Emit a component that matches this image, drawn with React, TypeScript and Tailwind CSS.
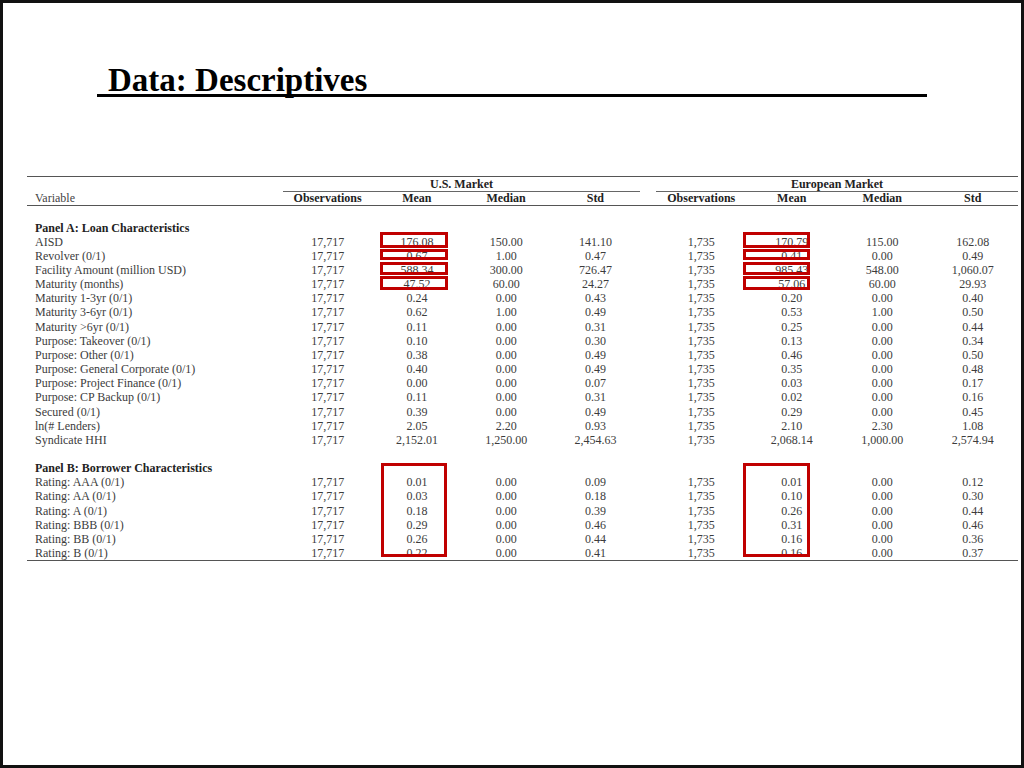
const panelA: [string, string[]][] = [
  ['AISD', ['17,717', '176.08', '150.00', '141.10', '1,735', '170.79', '115.00', '162.08']],
  ['Revolver (0/1)', ['17,717', '0.67', '1.00', '0.47', '1,735', '0.41', '0.00', '0.49']],
  ['Facility Amount (million USD)', ['17,717', '588.34', '300.00', '726.47', '1,735', '985.43', '548.00', '1,060.07']],
  ['Maturity (months)', ['17,717', '47.52', '60.00', '24.27', '1,735', '57.06', '60.00', '29.93']],
  ['Maturity 1-3yr (0/1)', ['17,717', '0.24', '0.00', '0.43', '1,735', '0.20', '0.00', '0.40']],
  ['Maturity 3-6yr (0/1)', ['17,717', '0.62', '1.00', '0.49', '1,735', '0.53', '1.00', '0.50']],
  ['Maturity >6yr (0/1)', ['17,717', '0.11', '0.00', '0.31', '1,735', '0.25', '0.00', '0.44']],
  ['Purpose: Takeover (0/1)', ['17,717', '0.10', '0.00', '0.30', '1,735', '0.13', '0.00', '0.34']],
  ['Purpose: Other (0/1)', ['17,717', '0.38', '0.00', '0.49', '1,735', '0.46', '0.00', '0.50']],
  ['Purpose: General Corporate (0/1)', ['17,717', '0.40', '0.00', '0.49', '1,735', '0.35', '0.00', '0.48']],
  ['Purpose: Project Finance (0/1)', ['17,717', '0.00', '0.00', '0.07', '1,735', '0.03', '0.00', '0.17']],
  ['Purpose: CP Backup (0/1)', ['17,717', '0.11', '0.00', '0.31', '1,735', '0.02', '0.00', '0.16']],
  ['Secured (0/1)', ['17,717', '0.39', '0.00', '0.49', '1,735', '0.29', '0.00', '0.45']],
  ['ln(# Lenders)', ['17,717', '2.05', '2.20', '0.93', '1,735', '2.10', '2.30', '1.08']],
  ['Syndicate HHI', ['17,717', '2,152.01', '1,250.00', '2,454.63', '1,735', '2,068.14', '1,000.00', '2,574.94']],
];

const panelB: [string, string[]][] = [
  ['Rating: AAA (0/1)', ['17,717', '0.01', '0.00', '0.09', '1,735', '0.01', '0.00', '0.12']],
  ['Rating: AA (0/1)', ['17,717', '0.03', '0.00', '0.18', '1,735', '0.10', '0.00', '0.30']],
  ['Rating: A (0/1)', ['17,717', '0.18', '0.00', '0.39', '1,735', '0.26', '0.00', '0.44']],
  ['Rating: BBB (0/1)', ['17,717', '0.29', '0.00', '0.46', '1,735', '0.31', '0.00', '0.46']],
  ['Rating: BB (0/1)', ['17,717', '0.26', '0.00', '0.44', '1,735', '0.16', '0.00', '0.36']],
  ['Rating: B (0/1)', ['17,717', '0.22', '0.00', '0.41', '1,735', '0.16', '0.00', '0.37']],
];

const cols = 'grid grid-cols-[256px_89.25px_89.25px_89.25px_89.25px_16px_90.5px_90.5px_90.5px_90.5px]';
const heads = ['Observations', 'Mean', 'Median', 'Std'];

function Row({ label, values }: { label: string; values: string[] }) {
  return (
    <div className={`${cols} h-[14.17px] leading-[14.17px]`}>
      <div className="pl-2 whitespace-nowrap">{label}</div>
      {values.slice(0, 4).map((v, i) => (
        <div key={i} className="text-center">{v}</div>
      ))}
      <div />
      {values.slice(4).map((v, i) => (
        <div key={i} className="text-center">{v}</div>
      ))}
    </div>
  );
}

function PanelTitle({ children }: { children: string }) {
  return (
    <div className="h-[14.17px] leading-[14.17px] pl-2 font-bold text-[#222]">{children}</div>
  );
}

export default function App() {
  return (
    <div className="w-[1024px] h-[768px] border-[3px] border-[#111] bg-white font-['Liberation_Serif',serif] overflow-hidden">
      {/* Title */}
      <div className="ml-[94px] mt-[58px] w-[830px] border-b-[3px] border-black pl-[11px] pt-[3px] h-[36px] text-[33px] leading-[33px] font-bold text-black whitespace-nowrap">
        Data: Descriptives
      </div>

      {/* Table */}
      <div className="relative ml-[24px] mt-[79px] w-[991px] text-[12px] text-[#3c3c3c]">
        <div className="border-t border-[#555]">
          <div className={`${cols} h-[14px] leading-[14px] font-bold text-[#222]`}>
            <div />
            <div className="col-span-4 text-center border-b border-[#666]">U.S. Market</div>
            <div />
            <div className="col-span-4 text-center border-b border-[#666]">European Market</div>
          </div>
          <div className={`${cols} h-[15px] leading-[15px] border-b border-[#555]`}>
            <div className="pl-2 text-[#444]">Variable</div>
            {heads.map((h) => (
              <div key={h} className="text-center font-bold text-[#222]">{h}</div>
            ))}
            <div />
            {heads.map((h) => (
              <div key={'e' + h} className="text-center font-bold text-[#222]">{h}</div>
            ))}
          </div>
        </div>

        <div className="pt-[14.5px] border-b border-[#555]">
          <PanelTitle>Panel A: Loan Characteristics</PanelTitle>
          {panelA.map(([l, v]) => (
            <Row key={l} label={l} values={v} />
          ))}
          <div className="h-[14.17px]" />
          <PanelTitle>Panel B: Borrower Characteristics</PanelTitle>
          {panelB.map(([l, v]) => (
            <Row key={l} label={l} values={v} />
          ))}
        </div>

        {/* Highlight boxes */}
        <div className="absolute left-[353px] top-[56px] w-[68px] h-[16px] border-[3px] border-[#c00000]" />
        <div className="absolute left-[353px] top-[73px] w-[68px] h-[11px] border-[3px] border-[#c00000]" />
        <div className="absolute left-[353px] top-[86px] w-[68px] h-[13px] border-[3px] border-[#c00000]" />
        <div className="absolute left-[353px] top-[100px] w-[68px] h-[14px] border-[3px] border-[#c00000]" />
        <div className="absolute left-[716px] top-[56px] w-[67px] h-[16px] border-[3px] border-[#c00000]" />
        <div className="absolute left-[716px] top-[73px] w-[67px] h-[11px] border-[3px] border-[#c00000]" />
        <div className="absolute left-[716px] top-[86px] w-[67px] h-[13px] border-[3px] border-[#c00000]" />
        <div className="absolute left-[716px] top-[100px] w-[67px] h-[14px] border-[3px] border-[#c00000]" />
        <div className="absolute left-[354px] top-[287px] w-[66px] h-[94px] border-[3px] border-[#c00000]" />
        <div className="absolute left-[716px] top-[287px] w-[67px] h-[94px] border-[3px] border-[#c00000]" />
      </div>
    </div>
  );
}
